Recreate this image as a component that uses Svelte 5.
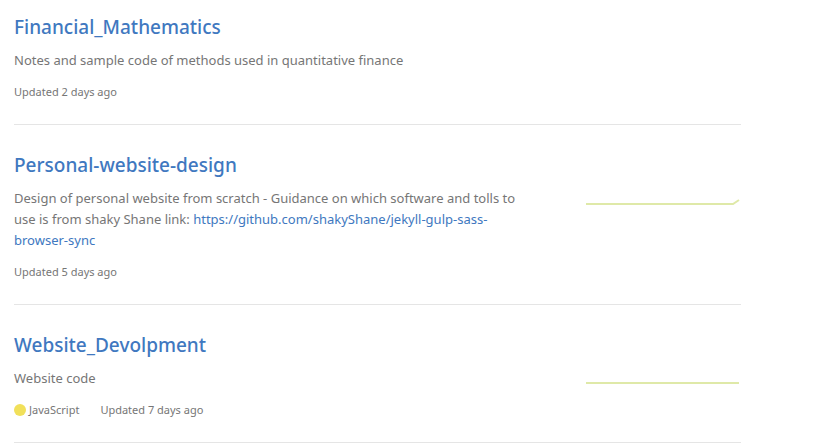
<script>
  const repos = [
    {
      name: 'Financial_Mathematics',
      text: 'Notes and sample code of methods used in quantitative finance',
      updated: 'Updated 2 days ago'
    },
    {
      name: 'Personal-website-design',
      text: 'Design of personal website from scratch - Guidance on which software and tolls to use is from shaky Shane link: ',
      link: 'https://github.com/shakyShane/jekyll-gulp-sass-browser-sync',
      updated: 'Updated 5 days ago',
      activity: '0,17 147,17 153,13'
    },
    {
      name: 'Website_Devolpment',
      text: 'Website code',
      language: 'JavaScript',
      color: '#f1e05a',
      updated: 'Updated 7 days ago',
      activity: '0,16 153,16'
    }
  ];
</script>

<main>
  <ul>
    {#each repos as repo}
      <li>
        <div class="info">
          <h3><a href="#{repo.name}">{repo.name}</a></h3>
          <p>{repo.text}{#if repo.link}<a href={repo.link}>{repo.link}</a>{/if}</p>
          <div class="meta">
            {#if repo.language}
              <span class="language">
                <span class="dot" style="background: {repo.color}"></span>{repo.language}
              </span>
            {/if}
            <span>{repo.updated}</span>
          </div>
        </div>
        {#if repo.activity}
          <svg class="graph" width="155" height="30" viewBox="0 0 155 30" aria-label="Commit activity" role="img">
            <polyline points={repo.activity} fill="none" stroke="#dfe9a8" stroke-width="2" />
          </svg>
        {/if}
      </li>
    {/each}
  </ul>
</main>

<style>
  :global(body) {
    background: #fff;
  }
  main {
    padding: 0 90px 0 14px;
    color: #767676;
    font: 13px/21px "Segoe UI", "Noto Sans", "Open Sans", sans-serif;
  }
  ul {
    margin: 0;
    padding: 0;
    list-style: none;
  }
  li {
    display: flex;
    justify-content: space-between;
    padding: 25px 0 23px;
    border-bottom: 1px solid #e5e5e5;
  }
  li:first-child {
    padding-top: 12px;
  }
  .info {
    flex: 0 1 522px;
  }
  h3 {
    margin: 0 0 8px;
    font-size: 19px;
    font-weight: 500;
    line-height: 30px;
  }
  a {
    color: #4078c0;
    text-decoration: none;
  }
  p {
    margin: 0 0 12px;
  }
  .meta {
    display: flex;
    gap: 21px;
    font-size: 11px;
    line-height: 18px;
  }
  .language {
    display: flex;
    align-items: center;
    gap: 3px;
  }
  .dot {
    width: 12px;
    height: 12px;
    border-radius: 50%;
  }
  .graph {
    flex: none;
    margin-top: 37px;
  }
</style>
